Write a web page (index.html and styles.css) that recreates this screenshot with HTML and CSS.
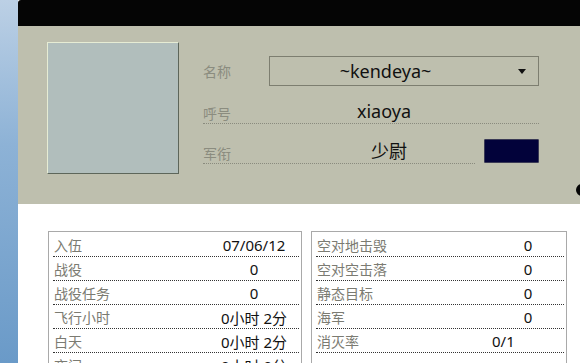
FILE: index.html
```html
<!DOCTYPE html>
<html>
<head>
<meta charset="utf-8">
<link rel="stylesheet" href="styles.css">
</head>
<body>
<div class="app">
  <div class="strip"></div>
  <div class="main">
    <div class="topbar"></div>
    <div class="profile">
      <div class="avatar"></div>
      <div class="form">
        <div class="row row-name">
          <span class="label">名称</span>
          <div class="select">
            <span class="select-text">~kendeya~</span>
            <span class="arrow"></span>
          </div>
        </div>
        <div class="row row-call">
          <span class="label">呼号</span>
          <span class="value call">xiaoya</span>
        </div>
        <div class="row row-rank">
          <div class="rank-line">
            <span class="label">军衔</span>
            <span class="value rank">少尉</span>
          </div>
          <div class="swatch"></div>
        </div>
      </div>
      <div class="dot"></div>
    </div>
    <div class="stats">
      <div class="table left">
        <div class="trow"><span class="tl">入伍</span><span class="tv">07/06/12</span></div>
        <div class="trow"><span class="tl">战役</span><span class="tv">0</span></div>
        <div class="trow"><span class="tl">战役任务</span><span class="tv">0</span></div>
        <div class="trow"><span class="tl">飞行小时</span><span class="tv">0小时 2分</span></div>
        <div class="trow"><span class="tl">白天</span><span class="tv">0小时 2分</span></div>
        <div class="trow"><span class="tl">夜间</span><span class="tv">0小时 0分</span></div>
      </div>
      <div class="table right">
        <div class="trow"><span class="tl">空对地击毁</span><span class="tv">0</span></div>
        <div class="trow"><span class="tl">空对空击落</span><span class="tv">0</span></div>
        <div class="trow"><span class="tl">静态目标</span><span class="tv">0</span></div>
        <div class="trow"><span class="tl">海军</span><span class="tv">0</span></div>
        <div class="trow"><span class="tl">消灭率</span><span class="tv shift">0/1</span></div>
        <div class="trow"><span class="tl">&nbsp;</span><span class="tv">&nbsp;</span></div>
      </div>
    </div>
  </div>
</div>
</body>
</html>
```

FILE: styles.css
```css
* { box-sizing: border-box; }
html, body { margin: 0; padding: 0; }
body {
  width: 580px;
  height: 363px;
  overflow: hidden;
  background: #ffffff;
  font-family: "Noto Sans", "Noto Sans CJK SC", sans-serif;
}
.app {
  display: flex;
  height: 363px;
}
.strip {
  width: 18px;
  flex: none;
  background: linear-gradient(to bottom, #bcd0e5 0%, #8db2d6 40%, #6a9ac8 100%);
}
.main {
  flex: 1;
  display: flex;
  flex-direction: column;
  min-width: 0;
}
.topbar {
  flex: none;
  height: 26px;
  background: #050505;
  border-top-left-radius: 3px;
}
.profile {
  flex: none;
  position: relative;
  height: 178px;
  background: #bebfae;
  display: flex;
  align-items: flex-start;
  padding: 16px 0 0 29px;
}
.avatar {
  width: 132px;
  height: 132px;
  flex: none;
  background: #b1bebc;
  border-top: 1px solid #e6ecd4;
  border-left: 1px solid #e6ecd4;
  border-right: 1px solid #5d665a;
  border-bottom: 1px solid #5d665a;
}
.form {
  margin-left: 24px;
  width: 336px;
  display: flex;
  flex-direction: column;
}
.row {
  display: flex;
  align-items: center;
}
.label {
  width: 66px;
  flex: none;
  font-size: 14px;
  color: #8b8c7f;
  line-height: 18px;
}
.row-name {
  margin-top: 14px;
  height: 30px;
}
.row-name .label { padding-top: 2px; }
.select {
  flex: 1;
  height: 30px;
  border: 1px solid #7d7e70;
  display: flex;
  align-items: center;
  justify-content: center;
  position: relative;
}
.select-text {
  font-size: 18px;
  color: #111;
  margin-left: -37px;
}
.arrow {
  position: absolute;
  right: 12px;
  top: 12px;
  width: 0;
  height: 0;
  border-left: 4px solid transparent;
  border-right: 4px solid transparent;
  border-top: 5px solid #111;
}
.value {
  flex: 1;
  text-align: center;
  font-size: 18px;
  color: #111;
  line-height: 24px;
}
.row-call {
  margin-top: 13px;
  height: 25px;
  border-bottom: 1px dotted #8a8b7e;
  align-items: flex-end;
}
.call { padding-right: 40px; }
.row-rank {
  margin-top: 15px;
  align-items: flex-end;
}
.rank-line {
  display: flex;
  align-items: flex-end;
  width: 272px;
  height: 25px;
  border-bottom: 1px dotted #8a8b7e;
}
.rank { padding-left: 34px; }
.swatch {
  margin-left: 9px;
  width: 55px;
  height: 24px;
  margin-bottom: 1px;
  background: #02023a;
  border: 1px solid #3a3a55;
  border-radius: 1px;
}
.dot {
  position: absolute;
  right: -8px;
  top: 158px;
  width: 12px;
  height: 12px;
  border-radius: 50%;
  background: #050505;
}
.stats {
  display: flex;
  padding: 27px 0 0 30px;
  gap: 9px;
}
.table {
  border: 1px solid #a9a9a9;
  border-bottom: none;
  padding: 1px 2px 0 4px;
}
.table.left { width: 254px; }
.table.right { width: 256px; }
.trow {
  display: flex;
  height: 24px;
  align-items: center;
  border-bottom: 1px dotted #333;
}
.tl {
  flex: 1;
  font-size: 14px;
  color: #7b7b72;
  padding-left: 1px;
  padding-top: 1px;
}
.tv {
  font-size: 15px;
  color: #111;
  text-align: center;
  padding-top: 1px;
}
.left .tv { width: 90px; }
.right .tv { width: 72px; }
.right .tv.shift { padding-right: 50px; }
```
